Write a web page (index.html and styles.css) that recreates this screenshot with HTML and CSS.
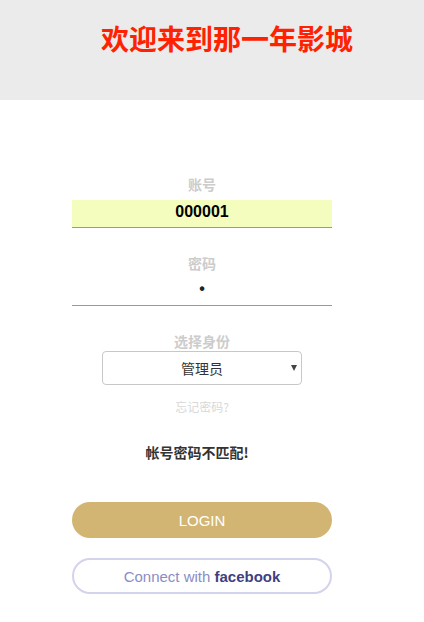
FILE: index.html
```html
<!DOCTYPE html>
<html lang="zh">
<head>
<meta charset="utf-8">
<title>那一年影城</title>
<link rel="stylesheet" href="styles.css">
</head>
<body>
<header class="top">
  <h1 class="title">欢迎来到那一年影城</h1>
</header>
<main class="form">
  <label class="lbl">账号</label>
  <input class="field field-filled" type="text" value="000001">
  <label class="lbl lbl-gap">密码</label>
  <input class="field field-pw" type="password" value="a">
  <label class="lbl lbl-gap2">选择身份</label>
  <span class="select-wrap">
    <select class="select">
      <option>管理员</option>
    </select>
  </span>
  <a class="forgot">忘记密码?</a>
  <p class="error">帐号密码不匹配!</p>
  <button class="btn btn-login">LOGIN</button>
  <button class="btn btn-fb">Connect with <b>facebook</b></button>
</main>
</body>
</html>
```
FILE: styles.css
```css
html, body {
  margin: 0;
  padding: 0;
  background: #fff;
  font-family: "Liberation Sans", "Noto Sans CJK SC", sans-serif;
}
.top {
  height: 100px;
  background: #ebebeb;
  padding-left: 30px;
  box-sizing: border-box;
}
.title {
  margin: 0;
  padding-top: 19px;
  text-align: center;
  font-size: 28px;
  line-height: 38px;
  font-weight: bold;
  color: #ff2200;
  font-family: "Noto Sans CJK SC", sans-serif;
}
.form {
  width: 260px;
  margin-left: 72px;
  padding-top: 74px;
  display: flex;
  flex-direction: column;
  align-items: center;
}
.lbl {
  font-family: "Noto Sans CJK SC", sans-serif;
  font-size: 14px;
  line-height: 20px;
  font-weight: bold;
  color: #cccccc;
  margin-bottom: 6px;
}
.lbl-gap { margin-top: 25px; margin-bottom: 5px; }
.lbl-gap2 { margin-top: 25px; margin-bottom: 0; }
.field {
  width: 100%;
  height: 28px;
  box-sizing: border-box;
  border: none;
  border-bottom: 1px solid #999;
  background: transparent;
  text-align: center;
  font-family: "Liberation Sans", "Noto Sans CJK SC", sans-serif;
  font-size: 16px;
  font-weight: bold;
  color: #000;
  outline: none;
  padding: 0 0 4px;
}
.field-pw { padding-bottom: 6px; color: #222; }
.field-filled { background: #f4fdbd; }
.select-wrap {
  position: relative;
  display: block;
  width: 200px;
  height: 34px;
}
.select-wrap::after {
  content: "";
  position: absolute;
  right: 5px;
  top: 14px;
  border-left: 3px solid transparent;
  border-right: 3px solid transparent;
  border-top: 6px solid #444;
}
.select {
  appearance: none;
  -webkit-appearance: none;
  width: 200px;
  height: 34px;
  border: 1px solid #c8c8c8;
  border-radius: 4px;
  background: #fff;
  text-align: center;
  text-align-last: center;
  font-family: "Noto Sans CJK SC", sans-serif;
  font-size: 14px;
  color: #333;
  padding: 0;
}
.forgot {
  margin-top: 14px;
  font-family: "Noto Sans CJK SC", sans-serif;
  font-size: 12px;
  line-height: 16px;
  color: #d8d8d8;
}
.error {
  margin: 27px 0 0;
  padding-right: 10px;
  font-family: "Noto Sans CJK SC", sans-serif;
  font-size: 14px;
  line-height: 20px;
  font-weight: bold;
  color: #333;
}
.btn {
  width: 260px;
  height: 36px;
  border-radius: 18px;
  font-family: "Liberation Sans", sans-serif;
  font-size: 15px;
  cursor: pointer;
  padding: 0;
}
.btn-login {
  margin-top: 40px;
  background: #d2b572;
  border: none;
  color: #fff;
}
.btn-fb {
  margin-top: 20px;
  background: #fff;
  border: 2px solid #d3d3ec;
  color: #8c8cc4;
}
.btn-fb b { color: #3f3f82; }
```
